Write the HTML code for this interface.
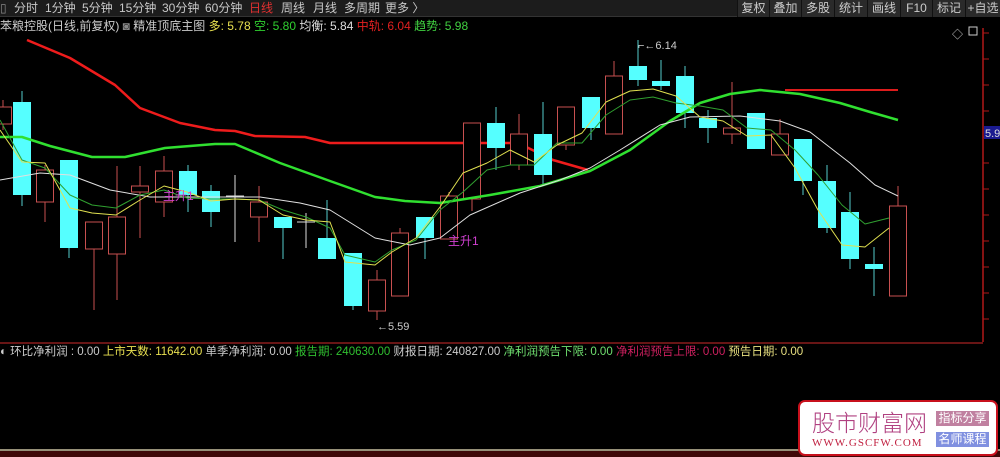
<!DOCTYPE html>
<html><head><meta charset="utf-8"><style>
*{margin:0;padding:0;box-sizing:border-box}
body{width:1000px;height:457px;background:#000;overflow:hidden;font-family:"Liberation Sans","Noto Sans CJK SC",sans-serif;position:relative}
.top{position:absolute;left:0;top:0;width:1000px;height:17px;background:#1c1c1c;border-bottom:1px solid #333}
.top span{position:absolute;top:1px;font-size:12px;color:#c8c8c8;line-height:15px}
.btn{position:absolute;top:0;height:17px;background:#2a2a2a;color:#ccc;font-size:12px;line-height:17px;text-align:center;border-left:1px solid #111}
.t2{position:absolute;top:19px;left:0;font-size:12px;line-height:14px;white-space:nowrap;color:#ccc}
.t3{position:absolute;top:345px;left:0;font-size:11.5px;line-height:14px;white-space:nowrap;color:#ccc}
</style></head><body>
<div class="top">
<span style="left:0;color:#888">▯</span>
<span style="left:14px">分时</span><span style="left:45px">1分钟</span><span style="left:82px">5分钟</span><span style="left:119px">15分钟</span><span style="left:162px">30分钟</span><span style="left:205px">60分钟</span><span style="left:249px;color:#e03030">日线</span><span style="left:281px">周线</span><span style="left:313px">月线</span><span style="left:344px">多周期</span><span style="left:385px">更多 〉</span>
</div>
<div class="btn" style="left:737px;width:32px">复权</div>
<div class="btn" style="left:769px;width:32px">叠加</div>
<div class="btn" style="left:801px;width:33px">多股</div>
<div class="btn" style="left:834px;width:33px">统计</div>
<div class="btn" style="left:867px;width:33px">画线</div>
<div class="btn" style="left:900px;width:32px">F10</div>
<div class="btn" style="left:932px;width:33px">标记</div>
<div class="btn" style="left:965px;width:35px">+自选</div>
<div class="t2"><span>苯粮控股(日线,前复权)</span> <span style="color:#888">◙</span> <span>精准顶底主图</span> <span style="color:#e8e050">多: 5.78</span> <span style="color:#30d030">空: 5.80</span> <span style="color:#ddd">均衡: 5.84</span> <span style="color:#e02020">中轨: 6.04</span> <span style="color:#40d040">趋势: 5.98</span></div>
<svg style="position:absolute;left:0;top:0" width="1000" height="457">
<g fill="none" stroke-linejoin="round">
<polyline stroke="#ee1c1c" stroke-width="2.5" points="27,40 70,58 115,85 140,108 180,123 215,130 235,131 255,136 305,137 330,143 518,143 553,160 588,170"/>
<polyline stroke="#dd1c1c" stroke-width="2" points="785,90 898,90"/>
</g>
<g id="c"></g>
<g fill="none" stroke-linejoin="round">
<polyline stroke="#30e030" stroke-width="2.5" points="0,137 22,137 50,146 92,157 125,157 165,148 215,144 235,144 280,163 330,181 375,197 405,201 440,203 490,195 540,186 590,171 630,150 670,121 700,103 730,94 760,90 800,94 840,103 870,112 898,120"/>
<polyline stroke="#e0e0e0" stroke-width="1" points="0,180 40,173 70,175 110,190 150,197 200,197 235,197 260,197 300,203 330,210 375,238 410,245 440,238 470,215 520,193 560,180 590,168 620,150 660,125 690,117 740,116 780,121 810,132 850,163 875,185 898,196"/>
<polyline stroke="#30a030" stroke-width="1" points="0,120 22,160 45,168 70,195 92,205 116,208 140,195 164,190 187,198 211,199 235,199 259,200 283,210 306,217 330,228 345,255 375,262 392,250 416,240 440,210 463,192 487,170 510,165 534,165 557,143 582,143 606,115 630,100 653,97 676,103 700,106 723,110 747,128 771,130 795,150 818,175 842,205 865,224 889,218"/>
<polyline stroke="#e0e050" stroke-width="1" points="0,130 22,162 45,163 70,208 92,213 116,215 140,200 164,186 187,192 211,201 235,199 259,200 283,215 306,220 330,222 345,262 375,265 392,252 416,238 440,207 463,173 487,163 510,150 534,162 557,145 582,133 606,102 630,91 653,89 676,96 700,117 723,121 747,136 771,135 795,168 818,210 842,245 865,247 889,228"/>
</g>
<text x="163" y="200" fill="#d040d0" font-size="12">主升1</text>
<text x="448" y="245" fill="#d040d0" font-size="12">主升1</text>
<text x="377" y="330" fill="#ccc" font-size="11">←5.59</text>
<text x="638" y="49" fill="#ccc" font-size="11">⌐←6.14</text>
<line x1="983" y1="28" x2="983" y2="342" stroke="#b01818" stroke-width="1.5"/>
<g stroke="#b01818" stroke-width="1" id="tk"></g>
<rect x="984" y="126" width="16" height="13" fill="#1a1a90"/>
<text x="985" y="137" fill="#ddd" font-size="11">5.9</text>
<text x="952" y="38" fill="#ccc" font-size="11">◇</text>
<rect x="969" y="27" width="8" height="8" fill="none" stroke="#ccc"/>
<line x1="0" y1="343" x2="983" y2="343" stroke="#8a1c1c" stroke-width="1.5"/>
<line x1="0" y1="450" x2="1000" y2="450" stroke="#c8c0a0" stroke-width="1.5"/>
<rect x="0" y="451" width="1000" height="6" fill="#400808"/>
</svg>
<div class="t3"><span>◐ 环比净利润 : 0.00</span> <span style="color:#e8e050">上市天数: 11642.00</span> <span>单季净利润: 0.00</span> <span style="color:#30c030">报告期: 240630.00</span> <span>财报日期: 240827.00</span> <span style="color:#70e070">净利润预告下限: 0.00</span> <span style="color:#d02060">净利润预告上限: 0.00</span> <span style="color:#e8e080">预告日期: 0.00</span></div>
<div style="position:absolute;left:798px;top:400px;width:200px;height:56px;background:#fff;border:2px solid #c8101c;border-radius:7px">
<div style="position:absolute;left:12px;top:6px;font-size:23px;color:#b04080;line-height:26px;font-family:'Noto Sans CJK SC',sans-serif;font-weight:300">股市财富网</div>
<div style="position:absolute;left:12px;top:35px;font-size:11px;color:#c02040;font-family:'Liberation Serif',serif;letter-spacing:1px">WWW.GSCFW.COM</div>
<div style="position:absolute;left:136px;top:9px;width:53px;height:15px;background:#c080a0;color:#fff;font-size:12px;line-height:15px;text-align:center">指标分享</div>
<div style="position:absolute;left:136px;top:30px;width:53px;height:15px;background:#8090e0;color:#fff;font-size:12px;line-height:15px;text-align:center">名师课程</div>
</div>
<script>
var d=[[3,107,124,100,130,'r'],[22,102,195,91,206,'c'],[45,170,202,165,222,'r'],[69,160,248,160,258,'c'],[94,222,249,222,310,'r'],[117,217,254,166,300,'r'],[140,186,192,166,238,'r'],[164,171,202,156,217,'r'],[188,171,195,165,212,'c'],[211,191,212,185,227,'c'],[235,196,198,175,242,'w'],[259,202,217,186,242,'r'],[283,217,228,217,259,'c'],[306,222,224,213,248,'w'],[327,238,259,200,259,'c'],[353,253,306,253,310,'c'],[377,280,311,270,320,'r'],[400,233,296,228,296,'r'],[425,217,238,217,259,'c'],[449,196,239,192,239,'r'],[472,123,199,123,211,'r'],[496,123,148,107,170,'c'],[519,134,165,114,170,'r'],[543,134,175,102,185,'c'],[566,107,145,107,150,'r'],[591,97,128,97,140,'c'],[614,76,134,61,134,'r'],[638,66,80,40,86,'c'],[661,81,86,60,90,'c'],[685,76,113,66,128,'c'],[708,118,128,110,143,'c'],[732,128,134,82,144,'r'],[756,113,149,113,149,'c'],[780,134,155,119,155,'r'],[803,139,181,139,195,'c'],[827,181,228,165,233,'c'],[850,212,259,192,269,'c'],[874,264,269,247,296,'c'],[898,206,296,186,296,'r']];
var s='',ns='http://www.w3.org/2000/svg';
d.forEach(function(a){var x=a[0],t=a[5];
if(t=='w'){s+='<line x1="'+x+'" y1="'+a[3]+'" x2="'+x+'" y2="'+a[4]+'" stroke="#ddd"/><line x1="'+(x-9)+'" y1="'+a[1]+'" x2="'+(x+9)+'" y2="'+a[1]+'" stroke="#ddd"/>';return;}
var col=t=='c'?'#5ff':'#c85050';
s+='<line x1="'+x+'" y1="'+a[3]+'" x2="'+x+'" y2="'+a[4]+'" stroke="'+(t=='c'?'#5cc':col)+'"/>';
if(t=='c')s+='<rect x="'+(x-9)+'" y="'+a[1]+'" width="18" height="'+Math.max(2,a[2]-a[1])+'" fill="#5ff"/>';
else s+='<rect x="'+(x-8.5)+'" y="'+a[1]+'" width="17" height="'+Math.max(2,a[2]-a[1])+'" fill="#000" stroke="'+col+'"/>';});
document.getElementById('c').innerHTML=s;
var k='';for(var y=33;y<340;y+=26){k+='<line x1="983" y1="'+y+'" x2="989" y2="'+y+'"/>';}
document.getElementById('tk').innerHTML=k;
</script>
</body></html>
